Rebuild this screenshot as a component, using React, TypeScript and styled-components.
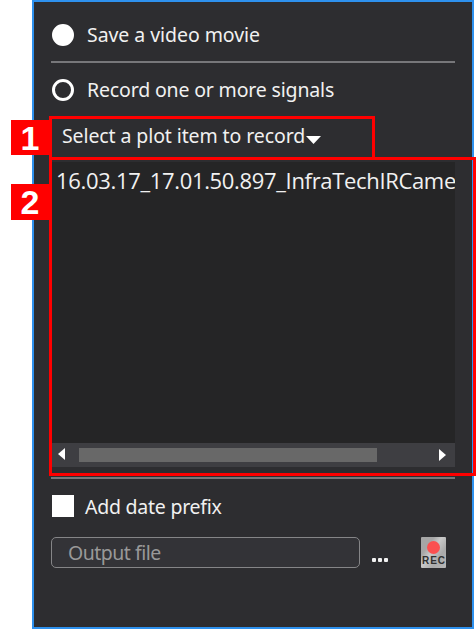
import React from "react";
import styled, { createGlobalStyle } from "styled-components";

const Global = createGlobalStyle`
  * { box-sizing: border-box; }
  body { margin: 0; background: #fff; overflow: hidden; font-family: "Noto Sans", sans-serif; }
`;

const Page = styled.main`
  position: relative;
  width: 476px;
  height: 629px;
  padding-left: 32px;
  overflow: hidden;
`;

const Panel = styled.section`
  display: flex;
  flex-direction: column;
  width: 442px;
  height: 629px;
  padding: 21px 17px 0;
  background: #2d2d30;
  border: 2px solid #2e91ee;
`;

const Text = styled.span<{ $spacing?: number; $color?: string }>`
  font-size: 19.5px;
  line-height: 24px;
  letter-spacing: ${(p) => p.$spacing ?? 0}px;
  color: ${(p) => p.$color ?? "#f1f1f1"};
  white-space: pre;
`;

const ItemText = styled(Text)`
  font-family: "Open Sans", sans-serif;
  font-size: 22px;
`;

const OptionRow = styled.label<{ $gap: number }>`
  display: flex;
  align-items: center;
  gap: ${(p) => p.$gap}px;
  height: 23px;
  padding-left: 1px;
`;

const Radio = styled.span<{ $filled?: boolean }>`
  width: 22px;
  height: 22px;
  border: 3px solid #fff;
  border-radius: 50%;
  background: ${(p) => (p.$filled ? "#fff" : "transparent")};
`;

const Checkbox = styled.span`
  width: 22px;
  height: 22px;
  margin-bottom: 1px;
  background: #fff;
`;

const Divider = styled.hr<{ $top: number; $bottom: number }>`
  width: 404px;
  height: 2px;
  flex: none;
  margin: ${(p) => p.$top}px 0 ${(p) => p.$bottom}px;
  border: 0;
  background: #77777a;
`;

const PlotSelect = styled.div`
  display: flex;
  align-items: center;
  height: 44px;
  margin-top: 16px;
  padding: 0 0 6px 11px;
`;

const DropArrow = styled.svg`
  margin: 7px 0 0 1px;
`;

const List = styled.div`
  display: flex;
  flex-direction: column;
  width: 404px;
  height: 305px;
  margin-top: 1px;
  background: #252526;
`;

const ListItem = styled.div`
  flex: 1;
  padding: 6px 0 0 5px;
  overflow: hidden;
`;

const ScrollBar = styled.div`
  display: flex;
  align-items: center;
  height: 24px;
  padding: 0 9px 0 7px;
  background: #3e3e42;
`;

const LeftArrow = styled.svg`
  margin-bottom: 3px;
`;

const Thumb = styled.div`
  width: 298px;
  height: 14px;
  margin: 0 62px 0 14px;
  background: #686868;
`;

const OutputRow = styled.div`
  display: flex;
  height: 31px;
  margin-top: 19px;
`;

const OutputField = styled.div`
  display: flex;
  align-items: center;
  width: 309px;
  height: 31px;
  padding-left: 16px;
  border: 1.5px solid #858587;
  border-radius: 5px;
  background: #333337;
`;

const Browse = styled.div`
  display: flex;
  gap: 2px;
  width: 61px;
  padding: 21px 0 0 12px;
`;

const Dot = styled.i`
  width: 4px;
  height: 4px;
  border-radius: 1px;
  background: #f1f1f1;
`;

const RecordButton = styled.div`
  display: flex;
  flex-direction: column;
  align-items: center;
  width: 25px;
  height: 31px;
  padding-top: 4px;
  border-radius: 1px;
  background: linear-gradient(125deg, #a6a6a6 0 28%, #c9c9c9 45%, #aaa 70%, #b8b8b8);
`;

const RecordDot = styled.i`
  width: 13px;
  height: 13px;
  border-radius: 50%;
  background: #fb5050;
`;

const RecordText = styled.span`
  margin: 2px 0 0 1px;
  font: 700 10px/10px "Liberation Sans", sans-serif;
  letter-spacing: 1px;
  color: #303030;
`;

const Outline = styled.div<{ $y: number; $w: number; $h: number }>`
  position: absolute;
  left: 49px;
  top: ${(p) => p.$y}px;
  width: ${(p) => p.$w}px;
  height: ${(p) => p.$h}px;
  border: 3px solid #f00;
`;

const Badge = styled.div<{ $y: number; $h: number }>`
  position: absolute;
  left: 11px;
  top: ${(p) => p.$y}px;
  display: flex;
  align-items: center;
  justify-content: center;
  width: 38px;
  height: ${(p) => p.$h}px;
  background: #f00;
  color: #fff;
  font: 700 34px/36px "Liberation Sans", sans-serif;
`;

export default function App() {
  return (
    <>
      <Global />
      <Page>
        <Panel>
          <OptionRow $gap={13}>
            <Radio $filled />
            <Text $spacing={-0.06}>Save a video movie</Text>
          </OptionRow>
          <Divider $top={15} $bottom={15} />
          <OptionRow $gap={13}>
            <Radio />
            <Text $spacing={-0.16}>Record one or more signals</Text>
          </OptionRow>
          <PlotSelect>
            <Text $spacing={-0.1}>Select a plot item to record</Text>
            <DropArrow width="15" height="8" viewBox="0 0 15 8">
              <path d="M0 0H15L7.5 8Z" fill="#fff" />
            </DropArrow>
          </PlotSelect>
          <List>
            <ListItem>
              <ItemText $spacing={-0.33}>16.03.17_17.01.50.897_InfraTechIRCame</ItemText>
            </ListItem>
            <ScrollBar>
              <LeftArrow width="7" height="12" viewBox="0 0 7 12">
                <path d="M7 0V12L0 6Z" fill="#fff" />
              </LeftArrow>
              <Thumb />
              <svg width="7" height="12" viewBox="0 0 7 12">
                <path d="M0 0V12L7 6Z" fill="#fff" />
              </svg>
            </ScrollBar>
          </List>
          <Divider $top={10} $bottom={16} />
          <OptionRow $gap={11}>
            <Checkbox />
            <Text $spacing={-0.24}>Add date prefix</Text>
          </OptionRow>
          <OutputRow>
            <OutputField>
              <Text $spacing={-0.5} $color="#999">Output file</Text>
            </OutputField>
            <Browse>
              <Dot />
              <Dot />
              <Dot />
            </Browse>
            <RecordButton>
              <RecordDot />
              <RecordText>REC</RecordText>
            </RecordButton>
          </OutputRow>
        </Panel>
        <Outline $y={116} $w={326} $h={44} />
        <Outline $y={157} $w={427} $h={319} />
        <Badge $y={120} $h={35}>1</Badge>
        <Badge $y={184} $h={36}>2</Badge>
      </Page>
    </>
  );
}
